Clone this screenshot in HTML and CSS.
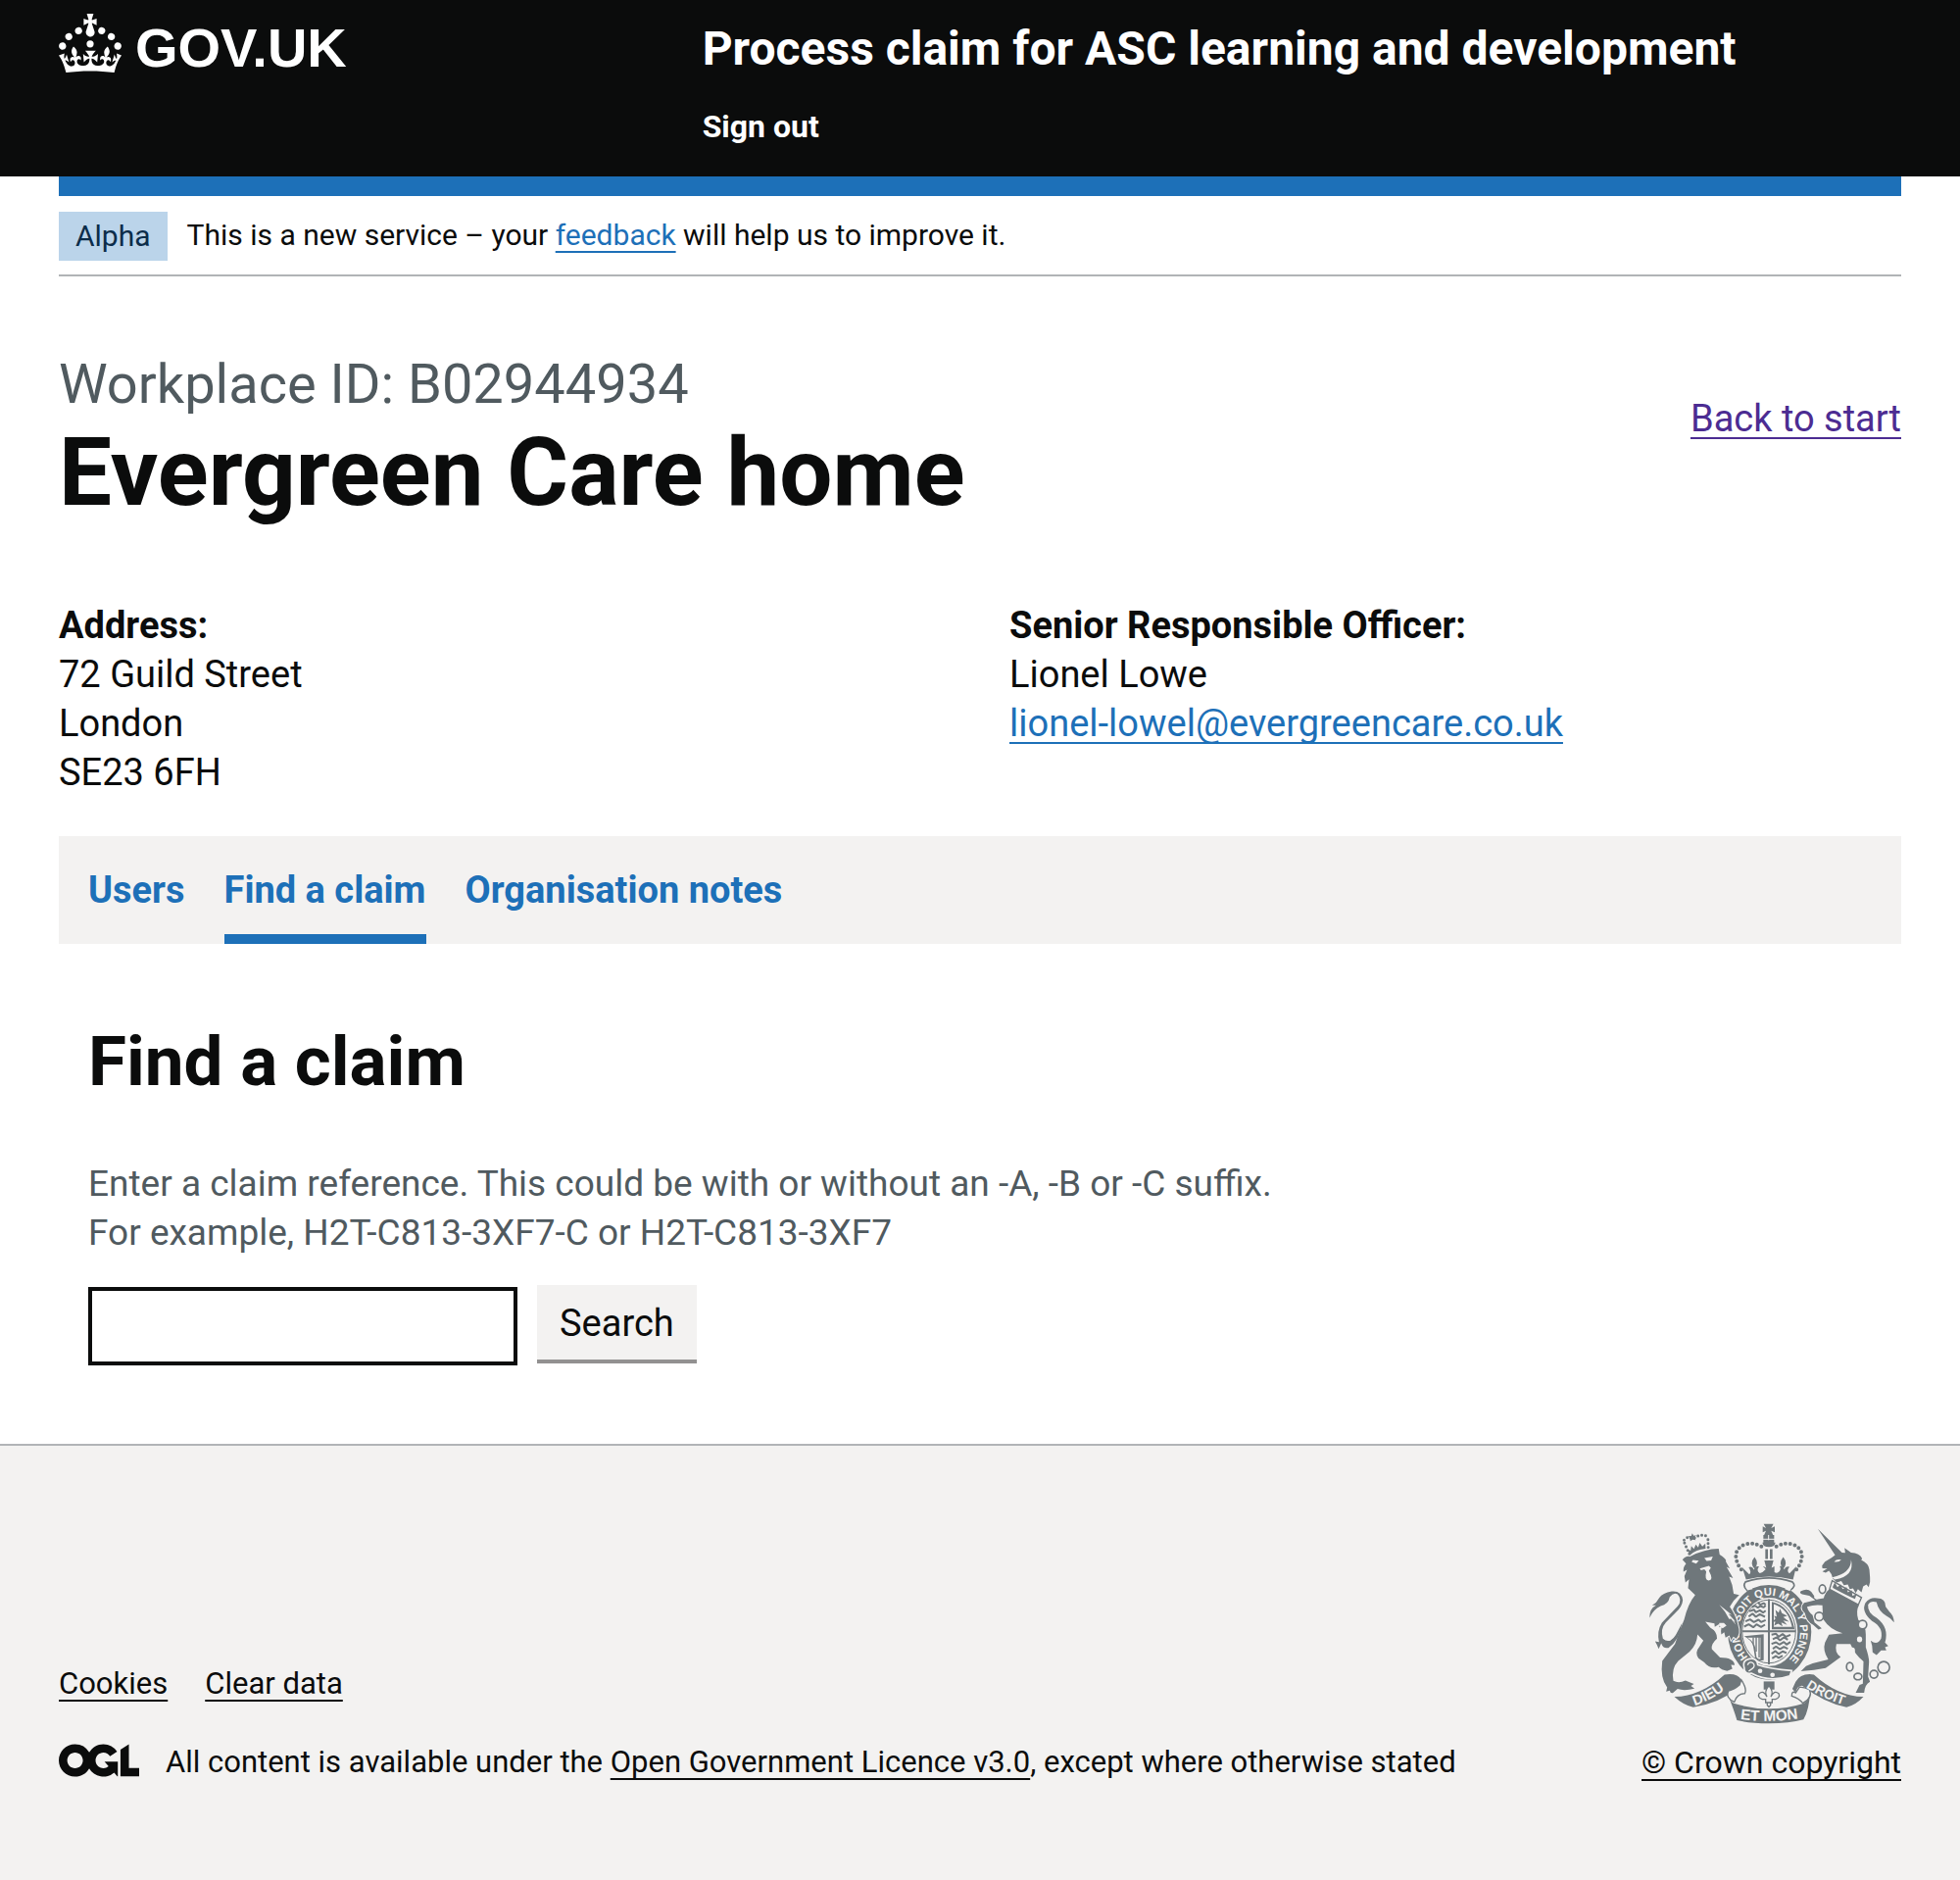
FILE: index.html
```html
<!DOCTYPE html>
<html lang="en">
<head>
<meta charset="utf-8">
<title>Find a claim</title>
<link rel="stylesheet" href="styles.css">
</head>
<body>
<header class="header">
  <div class="container header-grid">
    <a class="logo" href="#">
      <svg class="crown" viewBox="0 0 32 30" aria-hidden="true"><path d="M22.6 10.4c-1 .4-2-.1-2.4-1-.4-.9.1-2 1-2.4.9-.4 2 .1 2.4 1s-.1 2-1 2.4m4.9 3c-1 .4-2-.1-2.4-1-.4-.9.1-2 1-2.4.9-.4 2 .1 2.4 1s0 2-1 2.4m3.3 4.8c-1 .4-2-.1-2.4-1-.4-.9.1-2 1-2.4.9-.4 2 .1 2.4 1s-.1 2-1 2.4M17 4.7l2.3 1.2V2.5l-2.3.7-.2-.2.9-3h-3.4l.9 3-.2.2c-.1.1-2.3-.7-2.3-.7v3.4L15 4.7c.1.1.1.2.2.2l-1.3 4c-.1.2-.1.4-.1.6 0 1.1.8 2 1.9 2.2h.7c1-.2 1.9-1.1 1.9-2.1 0-.2 0-.4-.1-.6l-1.3-4c-.1-.2 0-.2.1-.3m-7.6 5.7c.9.4 2-.1 2.4-1 .4-.9-.1-2-1-2.4-.9-.4-2 .1-2.4 1s0 2 1 2.4m-5 3c.9.4 2-.1 2.4-1 .4-.9-.1-2-1-2.4-.9-.4-2 .1-2.4 1s.1 2 1 2.4m-3.2 4.8c.9.4 2-.1 2.4-1 .4-.9-.1-2-1-2.4-.9-.4-2 .1-2.4 1s0 2 1 2.4m14.8 11c4.4 0 8.6.3 12.3.8 1.1-4.5 2.4-7 3.7-8.8l-2.5-.9c.2 1.3.3 1.9 0 2.7-.4-.4-.8-1.1-1.1-2.3l-1.2 4c.7-.5 1.3-.8 2-.9-1.1 2.5-2.6 3.1-3.5 3-1.1-.2-1.7-1.2-1.5-2.1.3-1.2 1.5-1.5 2.1-.1 1.1-2.3-.8-3-2-2.3 1.9-1.9 2.1-3.5.6-5.6-2.1 1.6-2.1 3.2-1.2 5.5-1.2-1.4-3.2-.6-2.5 1.6.9-1.4 2.1-.5 1.9.8-.2 1.1-1.7 2.1-3.5 1.9-2.7-.2-2.9-2.1-2.9-3.6.7-.1 1.9.5 2.9 1.9l.4-4.3c-1.1 1.1-2.1 1.4-3.2 1.4.4-1.2 2.1-3 2.1-3h-5.4s1.7 1.9 2.1 3c-1.1 0-2.1-.2-3.2-1.4l.4 4.3c1-1.4 2.2-2 2.9-1.9-.1 1.5-.2 3.4-2.9 3.6-1.9.2-3.4-.8-3.5-1.9-.2-1.3 1-2.2 1.9-.8.7-2.3-1.2-3-2.5-1.6.9-2.2.9-3.9-1.2-5.5-1.5 2-1.3 3.7.6 5.6-1.2-.7-3.1 0-2 2.3.6-1.4 1.8-1.1 2.1.1.2.9-.3 1.9-1.5 2.1-.9.2-2.4-.5-3.5-3 .6 0 1.2.3 2 .9l-1.2-4c-.3 1.1-.7 1.9-1.1 2.3-.3-.8-.2-1.4 0-2.7l-2.9.9C1.3 23 2.6 25.5 3.7 30c3.7-.5 7.9-.8 12.3-.8"/><circle cx="16" cy="15.4" r="1.8"/></svg>
      <span class="wordmark">GOV.UK</span>
    </a>
    <div class="header-content">
      <a class="service-name" href="#">Process claim for ASC learning and development</a>
      <nav aria-label="Account"><a class="sign-out" href="#">Sign out</a></nav>
    </div>
  </div>
</header>

<div class="container">
  <div class="phase">
    <strong class="tag">Alpha</strong>
    <span>This is a new service – your <a class="link" href="#">feedback</a> will help us to improve it.</span>
  </div>

  <main>
    <div class="title-row">
      <div>
        <p class="caption">Workplace ID: B02944934</p>
        <h1 class="title">Evergreen Care home</h1>
      </div>
      <a class="link visited" href="#">Back to start</a>
    </div>

    <div class="details">
      <p><strong>Address:</strong><br>72 Guild Street<br>London<br>SE23 6FH</p>
      <p><strong>Senior Responsible Officer:</strong><br>Lionel Lowe<br><a class="link" href="#">lionel-lowel@evergreencare.co.uk</a></p>
    </div>

    <nav class="tabs" aria-label="Organisation">
      <a href="#">Users</a>
      <a href="#" class="current" aria-current="page">Find a claim</a>
      <a href="#">Organisation notes</a>
    </nav>

    <section class="find">
      <h2>Find a claim</h2>
      <form>
        <label class="hint" for="claim">Enter a claim reference. This could be with or without an -A, -B or -C suffix.<br>For example, H2T-C813-3XF7-C or H2T-C813-3XF7</label>
        <div class="search-row">
          <input id="claim" type="text">
          <button type="button">Search</button>
        </div>
      </form>
    </section>
  </main>
</div>

<footer class="footer">
  <div class="container footer-row">
    <div class="footer-main">
      <div class="footer-links"><a href="#">Cookies</a><a href="#">Clear data</a></div>
      <div class="licence">
        <svg class="ogl" viewBox="0 0 483.2 195.7" role="img" aria-label="OGL"><path d="M421.5 142.8V.1l-50.7 32.3v161.1h112.4v-50.7zm-122.3-9.6A47.12 47.12 0 0 1 221 97.8c0-26 21.1-47.1 47.1-47.1 16.7 0 31.4 8.7 39.7 21.8l42.7-27.2A97.63 97.63 0 0 0 268.1 0c-36.5 0-68.3 20.1-85.1 49.7A98 98 0 0 0 97.8 0C43.9 0 0 43.9 0 97.8s43.9 97.8 97.8 97.8c36.5 0 68.3-20.1 85.1-49.7a97.76 97.76 0 0 0 149.6 25.4l19.4 22.2h3v-87.8h-80l24.3 27.5zM97.8 145c-26 0-47.1-21.1-47.1-47.1s21.1-47.1 47.1-47.1 47.1 21.1 47.1 47.1S123.8 145 97.8 145"/></svg>
        <span>All content is available under the <a href="#">Open Government Licence v3.0</a>, except where otherwise stated</span>
      </div>
    </div>
    <div class="copyright">
      <svg class="crest" viewBox="72 70 750 616" aria-hidden="true">
        <defs>
          <path id="garter-arc" d="M349 374A94 110 0 1 1 495 491"/>
          <path id="garter-left" d="M374 480A94 110 0 0 1 346 400"/>
          <path id="dieu" d="M210 629Q265 612 314 571"/>
          <path id="etmon" d="M350 671Q440 683 532 668"/>
          <path id="droit" d="M551 573Q600 606 672 629"/>
        </defs>
        <!-- crown over the shield -->
        <g>
          <path d="M422 72h30l-7 13 11-5v18l-11-5 6 14h-28l6-14-10 5V80l10 5zM421 106h33v26h-33z"/>
          <path d="M418 129h40q-2 14-20 14t-20-14z"/>
          <path d="M437 106v16M420 119h36" stroke="#f3f2f1" stroke-width="3"/>
          <g fill="none" stroke="currentColor" stroke-width="12" stroke-linecap="round" stroke-dasharray="0 14.5">
            <path d="M415 141Q388 127 362 136Q328 152 340 188Q346 207 361 220"/>
            <path d="M461 141Q488 127 514 136Q548 152 536 188Q530 207 515 220"/>
          </g>
          <path d="M427 150h8v30h-8zM441 150h8v30h-8z"/>
          <path d="M356 205l22 22q8-8-2-22 11-5 16 8 5-14 16-10-10 13 2 20 10-2 18-12l-8-9h2l8 5-6-23h28l-6 23 9-5v18q8 5 14-1 8-8 2-17 10-3 14 10 5-13 16-8-10 14 0 20l21-22-10 41q-74-18-144 0z"/>
          <path d="M394 174q-16 19 0 36 15-17 0-36zM482 174q-16 19 0 36 15-17 0-36z"/>
          <path d="M366 250Q438 226 510 250Q524 263 502 276L487 272Q438 252 388 272L372 277Q356 263 366 250z" fill="none" stroke="currentColor" stroke-width="5"/>
        </g>
        <!-- garter and shield -->
        <ellipse cx="440" cy="403" rx="107" ry="126" fill="none" stroke="currentColor" stroke-width="42"/>
        <path d="M372 276Q366 262 380 256Q438 238 498 256Q512 262 502 278L487 272Q438 252 388 272z" fill="#f3f2f1"/>
        <path d="M388 272Q438 252 487 272" fill="none" stroke="currentColor" stroke-width="5"/>
        <ellipse cx="438" cy="402" rx="82" ry="97" fill="none" stroke="currentColor" stroke-width="3"/>
        <path d="M435 303h6v200h-6zM356 398h164v6H356z"/>
        <path d="M447 311Q502 322 517 395H447zm6 7v70h56q-12-56-56-70z" fill-rule="evenodd"/>
        <path d="M458 336l10 8 4-12 6 14 16 8-12 4 18 14-18-4 12 14-18-8 4 12-14-8-12 6 4-12-8 0 8-10-4-8 8 2z"/>
        <g fill="none" stroke="currentColor" stroke-width="6" stroke-linejoin="bevel">
          <path d="M404 313l8 7 10-5 6 5M386 327l10-4 8 6 8-5 10 4 6-6M378 340l14-5 6 8 12-6 10 7 8-6M376 356l12-9 10 10 12-8 16 8M366 371l14-6 12 8 14-7 8 7 14-6M362 387l14-7 14 9 10-9 14 8 12-7"/>
          <path d="M446 412l14-3 8 9 12-8 10 8 14-6M450 426l12-6 10 9 12-9 12 7M446 440l14-5 10 7 14-8 8 8 12-8M450 455l10-7 12 8 12-7 12 6M446 470l12-8 10 9 12-8 12 5M448 484l12-7 8 6 12-7"/>
        </g>
        <path d="M362 416l60-6v80q-20 4-26-6l-6-36q-4-20-28-32zm10 5q20 12 24 30l4 30q4 6 12 6v-66z" fill-rule="evenodd"/>
        <path d="M390 420v20M399 418v46M408 418v64" fill="none" stroke="currentColor" stroke-width="4"/>
        <path d="M362 512Q356 490 378 486Q402 482 404 504Q440 516 508 522L502 538Q440 560 384 530Q362 534 362 512z" stroke="#f3f2f1" stroke-width="5"/>
        <path d="M373 505a10 10 0 1 1 15 10l-12 9" fill="none" stroke="#f3f2f1" stroke-width="4"/>
        <g fill="#f3f2f1"><circle cx="411" cy="523" r="7"/><circle cx="449" cy="535" r="7"/></g>
        <g class="motto small">
          <text><textPath href="#garter-arc">SOIT QUI MAL Y PENSE</textPath></text>
          <text><textPath href="#garter-left">HON</textPath></text>
        </g>
        <!-- lion -->
        <path class="supporter" d="M173 182Q182 169 196 172Q240 149 284 148L287 166Q310 180 306 188L318 209 308 204 328 238 316 234Q328 260 330 286L347 290Q328 306 318 326Q336 350 343 382Q352 408 338 424L329 418 322 428 317 414 305 421 301 404 292 411Q288 390 299 381L286 389 286 379 272 388 271 377 243 372 258 390Q280 402 279 424Q260 440 263 456L288 482Q330 482 333 505L322 504 326 516 310 523Q292 520 284 511Q256 518 240 497L222 484Q210 466 224 450L237 430 219 411Q218 440 195 464L160 492Q138 515 145 553Q162 562 182 552L208 563 199 569 210 577Q178 585 158 578L144 590Q136 593 134 583L123 586 126 573Q104 546 111 492L150 440Q168 390 178 366Q190 316 212 290L190 269 193 242 182 252 179 232 187 213 176 219Q174 205 184 194z"/>
        <path d="M100 455Q96 444 89 432L101 434Q94 400 110 375L158 325Q174 305 158 288Q146 280 134 296Q130 318 106 324Q84 334 72 360Q72 332 92 322L80 322Q94 314 102 298Q112 284 140 279Q170 276 174 306Q172 326 154 342L122 374Q104 394 113 424Q138 446 160 398L172 376Q164 430 130 452Q114 456 108 438z"/>
        <g fill="#f3f2f1"><path d="M205 183l18 2-8 9-14-5zM240 177l26-5-5 12-14 2zM226 209l28-8 6 6-6 9q16 29-1 30-13-2-7-28l-6-7-10 3zM286 320l38 31-10-3 23 25-7-5 7 14-15-19-6 1-13-23z"/><path d="M286 376h14l8 8-12 8-11-8z"/></g>
        <path d="M194 164L176 124M252 144L251 112" fill="none" stroke="currentColor" stroke-width="9" stroke-linecap="round" stroke-dasharray="0 12"/>
        <path d="M178 122Q187 108 206 118Q228 100 248 110" fill="none" stroke="currentColor" stroke-width="9" stroke-linecap="round" stroke-dasharray="0 12"/>
        <path d="M188 150l10 4 2-14 8 9 6-14 7 9 5-14 8 11 9-9 1 16Q214 150 196 168zM203 101l4 7 8-1-6 8 5 7-10-2-7 5-1-9-6-6 10-1z"/>
        <!-- unicorn -->
        <path d="M588 87L662 160 672 161 670 146 690 160Q716 162 724 178L721 183Q744 194 746 212L748 236Q750 250 744 266L737 258 727 264 722 282 711 272 704 284 696 270 686 272 680 258 668 260 660 247 646 252 634 240Q632 226 622 216L612 222 602 218 617 209 602 208 601 200 610 188 630 176 641 168z"/>
        <path d="M690 182Q690 224 632 236L640 243Q702 232 690 182z" fill="#f3f2f1"/>
        <path d="M638 188q8-10 22-6-8 9-22 6z" fill="#f3f2f1"/>
        <path class="supporter" d="M624 272Q670 282 714 322Q704 340 712 366Q736 384 735 410L735 450Q745 480 745 495L742 540 748 556Q732 564 730 590L704 590 716 566 726 562 728 494Q700 470 688 440Q660 440 645 440Q638 466 658 480L612 514 576 520 536 524 552 508 572 500 620 488Q602 460 610 436L622 412 664 407Q626 398 604 364L602 322Q580 318 555 326Q558 340 572 352L578 374 600 392 590 396 574 382Q554 372 548 345Q530 330 546 314L580 306 562 292 540 288Q530 284 536 278Q556 268 568 280L584 304 606 300Q610 282 624 272z"/>
        <path d="M632 246L722 298 712 320 624 272z" fill="#f3f2f1" stroke="currentColor" stroke-width="4"/>
        <path d="M634 264l6-12 8 14 10-8 6 14 12-6 4 16 12-6 2 16 13-4-5 14Q674 290 634 268z"/>
        <path d="M756 466Q756 444 750 430Q770 446 782 424Q790 390 754 370Q720 340 734 314Q748 296 770 300Q796 300 796 326L808 342Q820 352 822 374Q814 362 798 354Q774 340 768 312Q750 306 742 320Q740 344 768 360Q808 390 794 436L804 446 794 450 798 460 782 460 768 474z"/>
        <!-- chain -->
        <g fill="none" stroke="currentColor" stroke-width="5"><ellipse cx="602" cy="272" rx="10" ry="13"/><circle cx="592" cy="356" r="13"/><circle cx="725" cy="381" r="13" fill="#f3f2f1"/><ellipse cx="686" cy="510" rx="10" ry="13"/><ellipse cx="711" cy="540" rx="12" ry="10"/><circle cx="760" cy="533" r="12"/><circle cx="790" cy="512" r="18"/></g>
        <g fill="#f3f2f1"><circle cx="584" cy="296" r="7"/><ellipse cx="716" cy="426" rx="8" ry="9"/><ellipse cx="694" cy="461" rx="8" ry="10"/></g>
        <!-- ribbon -->
        <path d="M148 602Q230 600 302 534Q342 528 353 550L346 574Q286 622 206 634Q176 628 148 602z"/>
        <path d="M728 602Q648 600 576 534Q536 528 520 556L510 578 520 590Q524 568 540 568Q610 622 676 634Q704 628 728 602z"/>
        <g fill="#f3f2f1" stroke="currentColor" stroke-width="4"><path d="M353 550Q372 578 364 592Q340 592 332 618Q304 606 314 584Q332 580 348 566z"/><path d="M520 590Q508 582 508 600Q530 606 542 622Q574 604 562 580Q548 572 532 572z"/></g>
        <path d="M312 596Q318 616 330 622Q438 656 546 622Q560 614 564 588Q562 640 544 672Q500 684 438 684Q380 684 340 674Q330 640 312 596z"/>
        <g class="motto">
          <text><textPath href="#dieu">DIEU</textPath></text>
          <text class="large"><textPath href="#etmon">ET MON</textPath></text>
          <text class="medium"><textPath href="#droit">DROIT</textPath></text>
        </g>
        <path d="M422 555h33v25h-33z"/>
        <path d="M438 568q16 18 6 34 10-22 24-10 6 12-10 18h-10v10h-8q8 6-2 13-10-7-2-13h-8v-10h-10q-16-6-10-18 14-12 24 10-10-16 6-34z" fill="#f3f2f1" stroke="currentColor" stroke-width="4"/>
      </svg>
      <a href="#">© Crown copyright</a>
    </div>
  </div>
</footer>
</body>
</html>
```
FILE: styles.css
```css
* { box-sizing: border-box; }

html, body { min-height: 100%; }

body {
  margin: 0;
  background: #f3f2f1;
  color: #0b0c0c;
  font: 400 38px/50px Roboto, "Noto Sans", sans-serif;
}

body > .container { background: #fff; box-shadow: 0 0 0 60px #fff; clip-path: inset(0 -60px); }

h1, h2, p { margin: 0; }

a { color: inherit; text-decoration-thickness: 2px; text-underline-offset: 6px; text-decoration-skip-ink: none; }

.container { margin: 0 60px; }

.header { background: #0b0c0c; color: #fff; }
.header a { text-decoration: none; }
.header-grid { display: grid; grid-template-columns: 1fr 2fr; padding-bottom: 30px; }
.logo { display: flex; align-items: flex-start; gap: 14px; padding-top: 14px; }
.crown { width: 64px; height: 60px; fill: #fff; }
.wordmark { font: 700 56px/70px "Liberation Sans", sans-serif; }
.header-content { padding: 20px 0 0 30px; font-weight: 700; }
.service-name { display: block; font-size: 48px; line-height: 60px; }
.sign-out { display: block; margin-top: 28px; font-size: 32px; line-height: 42px; }

.phase {
  display: flex;
  gap: 20px;
  padding: 16px 0 14px;
  border-top: 20px solid #1d70b8;
  border-bottom: 2px solid #b1b4b6;
  font-size: 30px;
}
.tag { padding: 0 17px; background: #bbd4ea; color: #0c2d4a; font-weight: 400; line-height: 50px; }
.phase span { line-height: 48px; }

.link { color: #1d70b8; }
.visited { color: #4c2c92; }

.title-row { display: flex; justify-content: space-between; align-items: flex-start; padding-top: 76px; }
.title-row .visited { margin-top: 44px; }
.caption { color: #505a5f; font-size: 56px; line-height: 68px; }
.title { font-size: 96px; line-height: 112px; }

.details { display: grid; grid-template-columns: 1fr 1fr; gap: 60px; padding-top: 75px; }

.tabs { display: flex; gap: 40px; margin-top: 40px; padding: 0 30px; background: #f3f2f1; font-weight: 700; }
.tabs a { padding: 30px 0 20px; border-bottom: 10px solid transparent; color: #1d70b8; text-decoration: none; }
.tabs .current { border-color: #1d70b8; }

.find { padding: 80px 30px; }
.find h2 { font-size: 71px; line-height: 80px; }
.hint { display: block; margin-top: 60px; color: #505a5f; font-size: 37px; }
.search-row { display: flex; gap: 20px; margin-top: 28px; }
.search-row input { width: 438px; height: 80px; margin: 2px 0 0; border: 4px solid #0b0c0c; font: inherit; }
.search-row button { height: 76px; padding: 2px 23px 0; border: 0; background: #f3f2f1; box-shadow: 0 4px 0 #929191; color: #0b0c0c; font: inherit; }

.footer { border-top: 2px solid #b1b4b6; background: #f3f2f1; font-size: 31px; }
.footer-row { display: flex; justify-content: space-between; align-items: flex-end; padding: 79px 0 96px; }
.footer-links { display: flex; gap: 38px; margin-bottom: 30px; }
.licence { display: flex; gap: 27px; }
.ogl { width: 82px; height: 34px; margin-top: 6px; fill: #0b0c0c; }
.copyright { display: flex; flex-direction: column; align-items: center; font-size: 32px; }
.crest { width: 250px; height: 205px; margin-bottom: 14px; color: #6f777b; fill: currentColor; }
.supporter { stroke: #f3f2f1; stroke-width: 6px; paint-order: stroke; }
.motto { fill: #f3f2f1; font: 700 44px "Liberation Sans", sans-serif; }
.small { font-size: 34px; }
.medium { font-size: 41px; }
.large { font-size: 46px; }
```
